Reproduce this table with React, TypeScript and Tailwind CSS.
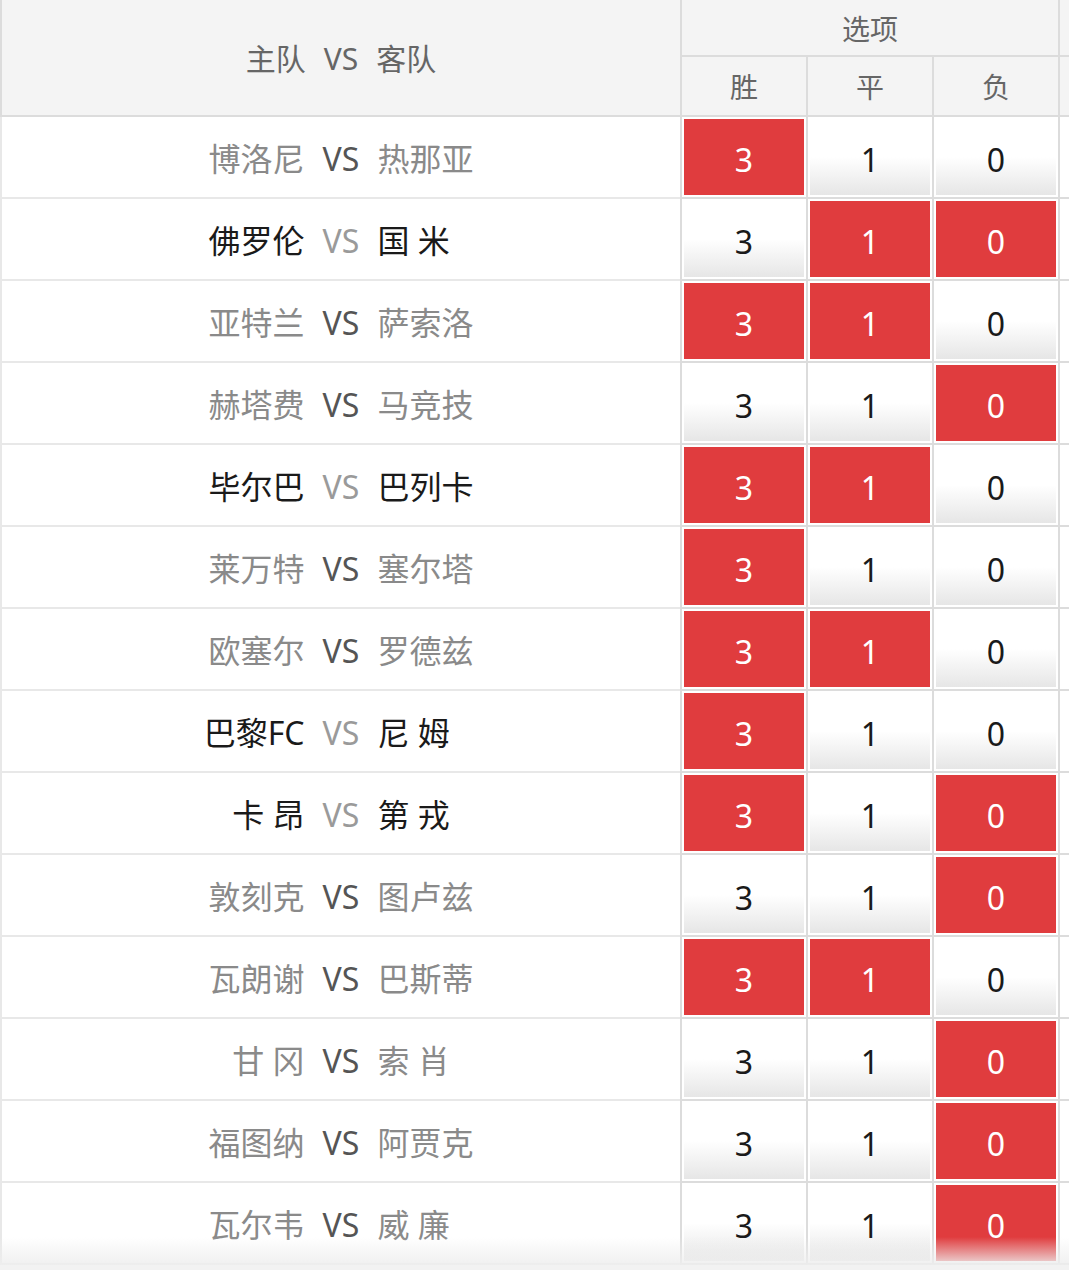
import React from "react";

type Row = { home: string; away: string; dark: boolean; sel: [boolean, boolean, boolean] };

const rows: Row[] = [
  { home: "博洛尼", away: "热那亚", dark: false, sel: [true, false, false] },
  { home: "佛罗伦", away: "国 米", dark: true, sel: [false, true, true] },
  { home: "亚特兰", away: "萨索洛", dark: false, sel: [true, true, false] },
  { home: "赫塔费", away: "马竞技", dark: false, sel: [false, false, true] },
  { home: "毕尔巴", away: "巴列卡", dark: true, sel: [true, true, false] },
  { home: "莱万特", away: "塞尔塔", dark: false, sel: [true, false, false] },
  { home: "欧塞尔", away: "罗德兹", dark: false, sel: [true, true, false] },
  { home: "巴黎FC", away: "尼 姆", dark: true, sel: [true, false, false] },
  { home: "卡 昂", away: "第 戎", dark: true, sel: [true, false, true] },
  { home: "敦刻克", away: "图卢兹", dark: false, sel: [false, false, true] },
  { home: "瓦朗谢", away: "巴斯蒂", dark: false, sel: [true, true, false] },
  { home: "甘 冈", away: "索 肖", dark: false, sel: [false, false, true] },
  { home: "福图纳", away: "阿贾克", dark: false, sel: [false, false, true] },
  { home: "瓦尔韦", away: "威 廉", dark: false, sel: [false, false, true] },
];

const labels = ["3", "1", "0"];

function OptCell({ value, on }: { value: string; on: boolean }) {
  return (
    <div className="h-[82px] border-l-2 border-b-2 border-[#dcdcdc] p-[2px]">
      {on ? (
        <div className="flex h-full w-full items-center justify-center bg-[#e03c3e] pt-[5px] text-[32px] text-white">
          {value}
        </div>
      ) : (
        <div className="flex h-full w-full items-center justify-center bg-gradient-to-b from-white from-50% to-[#e6e6e6] pt-[5px] text-[32px] text-[#1a1a1a]">
          {value}
        </div>
      )}
    </div>
  );
}

export default function App() {
  return (
    <div
      className="relative h-[1270px] w-[1069px] overflow-hidden bg-[#f2f2f2]"
      style={{ fontFamily: '"Noto Sans", "Noto Sans CJK SC", sans-serif' }}
    >
      <div className="grid w-[1184px] grid-cols-[680px_126px_126px_126px_126px] bg-white">
        {/* header */}
        <div className="row-span-2 flex h-[117px] items-center justify-center gap-[18px] border-b-2 border-l-2 border-[#dcdcdc] bg-[#f4f4f4] pt-[2px] text-[30px] text-[#666]">
          <span>主队</span>
          <span>VS</span>
          <span>客队</span>
        </div>
        <div className="col-span-3 flex h-[57px] items-center justify-center border-b-2 border-l-2 border-[#dcdcdc] bg-[#f4f4f4] pt-[2px] text-[28px] text-[#666]">
          选项
        </div>
        <div className="h-[57px] border-b-2 border-l-2 border-[#dcdcdc] bg-[#f4f4f4]" />
        {["胜", "平", "负"].map((t) => (
          <div
            key={t}
            className="flex h-[60px] items-center justify-center border-b-2 border-l-2 border-[#dcdcdc] bg-[#f4f4f4] pt-[2px] text-[28px] text-[#666]"
          >
            {t}
          </div>
        ))}
        <div className="h-[60px] border-b-2 border-l-2 border-[#dcdcdc] bg-[#f4f4f4]" />

        {/* body */}
        {rows.map((r, i) => (
          <React.Fragment key={i}>
            <div className="grid h-[82px] grid-cols-[1fr_auto_1fr] items-center gap-[18px] border-b-2 border-l-2 border-[#e8e8e8] pt-[4px] text-[32px]">
              <span className={`text-right ${r.dark ? "text-[#1a1a1a]" : "text-[#8a8a8a]"}`}>{r.home}</span>
              <span className={r.dark ? "text-[#9a9a9a]" : "text-[#555]"}>VS</span>
              <span className={`text-left ${r.dark ? "text-[#1a1a1a]" : "text-[#8a8a8a]"}`}>{r.away}</span>
            </div>
            {labels.map((l, j) => (
              <OptCell key={j} value={l} on={r.sel[j]} />
            ))}
            <div className="h-[82px] border-b-2 border-l-2 border-[#dcdcdc]" />
          </React.Fragment>
        ))}
      </div>
      <div className="pointer-events-none absolute bottom-[5px] left-0 h-[28px] w-full bg-gradient-to-b from-transparent to-[#eeeeee]/90" />
    </div>
  );
}
